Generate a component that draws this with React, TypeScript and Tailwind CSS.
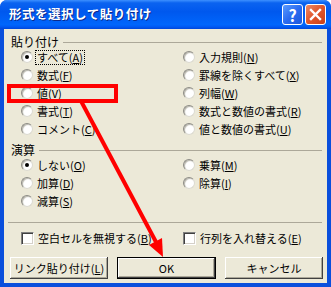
const font = { fontFamily: '"Noto Sans CJK JP", "Noto Sans", sans-serif' };

function Mn({ label, k }: { label: string; k: string }) {
  return (
    <>
      {label}(<u>{k}</u>)
    </>
  );
}

function Radio({
  label,
  k,
  checked = false,
  focus = false,
}: {
  label: string;
  k: string;
  checked?: boolean;
  focus?: boolean;
}) {
  return (
    <div className="flex items-center h-[18px]">
      <span className="flex items-center justify-center w-[12px] h-[12px] rounded-full bg-white border border-t-[#8c8b84] border-l-[#8c8b84] border-b-[#dcdad0] border-r-[#dcdad0] shadow-[inset_1px_1px_1px_#b8b6ac]">
        {checked && <span className="w-[4px] h-[4px] rounded-full bg-black" />}
      </span>
      <span
        className={
          focus
            ? "ml-[3px] px-[1px] leading-[13px] whitespace-nowrap outline outline-1 outline-dotted outline-black"
            : "ml-[3px] px-[1px] leading-[13px] whitespace-nowrap"
        }
      >
        <Mn label={label} k={k} />
      </span>
    </div>
  );
}

function Check({ label, k }: { label: string; k: string }) {
  return (
    <div className="flex items-center h-[13px]">
      <span className="w-[13px] h-[13px] bg-white border border-t-[#808080] border-l-[#808080] border-b-white border-r-white shadow-[inset_1px_1px_#404040,inset_-1px_-1px_#d4d0c8]" />
      <span className="ml-[4px] leading-[13px] whitespace-nowrap">
        <Mn label={label} k={k} />
      </span>
    </div>
  );
}

function GroupLabel({ text }: { text: string }) {
  return (
    <div className="flex items-center h-[12px] pl-[7px] pr-[5px]">
      <span className="leading-[12px] text-[12px]">{text}</span>
      <div className="flex-1 h-px bg-[#aca899] ml-[4px]" />
    </div>
  );
}

const btn =
  "w-[98px] h-[22px] bg-[#ece9d8] whitespace-nowrap shadow-[inset_-1px_-1px_#404040,inset_1px_1px_#ffffff,inset_-2px_-2px_#aca899]";

export default function App() {
  return (
    <div
      className="relative w-[331px] h-[287px] bg-[#0a4fdc] rounded-t-[7px] overflow-hidden text-[11px] text-black"
      style={font}
    >
      {/* title bar */}
      <div className="flex items-center h-[29px] pl-[9px] pr-[5px] bg-[linear-gradient(to_bottom,#3d90ff_0%,#0b63f0_10%,#0058ee_40%,#0066fc_85%,#005af4_92%,#0046da_100%)]">
        <span className="flex-1 text-white font-bold text-[12.5px] tracking-[0.5px] [text-shadow:1px_1px_#0c2a8c]">
          形式を選択して貼り付け
        </span>
        <div className="flex gap-[2px]">
          <div className="flex items-center justify-center w-[21px] h-[21px] rounded-[3px] border border-white bg-[linear-gradient(135deg,#5a9bff_0%,#2a6bf0_50%,#1e58dc_100%)] text-white font-bold text-[16px] leading-none">
            ?
          </div>
          <div className="flex items-center justify-center w-[21px] h-[21px] rounded-[3px] border border-white bg-[linear-gradient(135deg,#ee8a66_0%,#e0552b_50%,#c8401a_100%)]">
            <svg width="13" height="13" viewBox="0 0 13 13">
              <path d="M2 2 L11 11 M11 2 L2 11" stroke="white" strokeWidth="2.4" strokeLinecap="square" />
            </svg>
          </div>
        </div>
      </div>

      {/* body */}
      <div className="mx-[4px] h-[254px] bg-[#ece9d8] pt-[7px]">
        <GroupLabel text="貼り付け" />
        <div className="grid grid-cols-[162px_1fr] pl-[17px]">
          <div>
            <Radio label="すべて" k="A" checked focus />
            <Radio label="数式" k="F" />
            <Radio label="値" k="V" />
            <Radio label="書式" k="T" />
            <Radio label="コメント" k="C" />
          </div>
          <div>
            <Radio label="入力規則" k="N" />
            <Radio label="罫線を除くすべて" k="X" />
            <Radio label="列幅" k="W" />
            <Radio label="数式と数値の書式" k="R" />
            <Radio label="値と数値の書式" k="U" />
          </div>
        </div>

        <div className="mt-[6px]">
          <GroupLabel text="演算" />
        </div>
        <div className="grid grid-cols-[162px_1fr] pl-[17px]">
          <div>
            <Radio label="しない" k="O" checked />
            <Radio label="加算" k="D" />
            <Radio label="減算" k="S" />
          </div>
          <div>
            <Radio label="乗算" k="M" />
            <Radio label="除算" k="I" />
          </div>
        </div>

        <div className="mt-[12px] ml-[4px] mr-[5px] h-px bg-[#aca899]" />

        <div className="mt-[9px] grid grid-cols-[162px_1fr] pl-[17px]">
          <Check label="空白セルを無視する" k="B" />
          <Check label="行列を入れ替える" k="E" />
        </div>

        <div className="mt-[12px] flex gap-[9px] pl-[6px]">
          <button className={btn}>
            <Mn label="リンク貼り付け" k="L" />
          </button>
          <button className="w-[99px] h-[22px] bg-[#ece9d8] border border-black shadow-[inset_-1px_-1px_#404040,inset_1px_1px_#ffffff,inset_-2px_-2px_#aca899]">
            OK
          </button>
          <button className={btn}>キャンセル</button>
        </div>
      </div>

      {/* red annotation */}
      <div className="absolute left-[7px] top-[84px] w-[111px] h-[19px] border-[4px] border-[#ff0000]" />
      <svg className="absolute left-0 top-0 pointer-events-none" width="331" height="287" viewBox="0 0 331 287">
        <line x1="81" y1="101" x2="156" y2="242" stroke="#ff0000" strokeWidth="4" />
        <polygon points="163,257 149,245 162,238" fill="#ff0000" />
      </svg>
    </div>
  );
}
